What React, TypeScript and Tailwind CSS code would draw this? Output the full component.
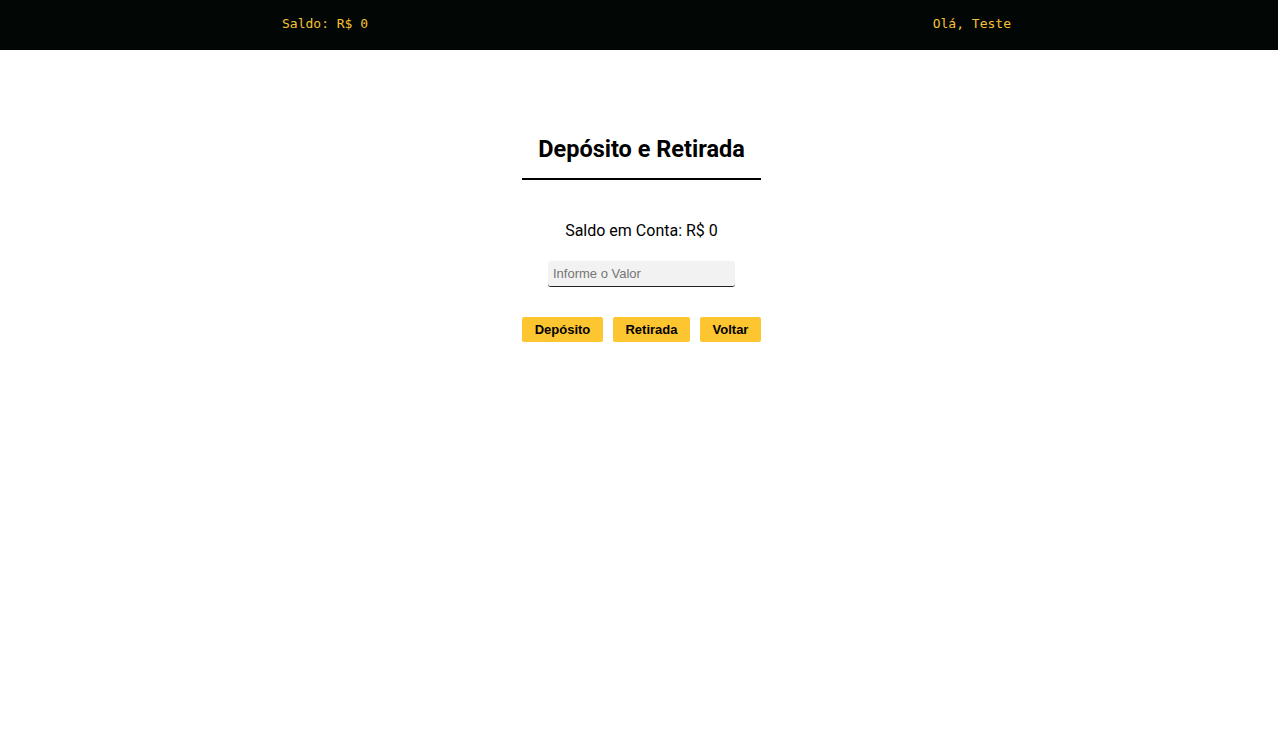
export default function App() {
  return (
    <div className="min-h-screen bg-white">
      {/* topo */}
      <header className="flex h-[50px] items-center justify-between bg-[#020604] pb-[2px] pl-[282px] pr-[267px] font-['DejaVu_Sans_Mono',monospace] text-[13px] text-[#f7c133]">
        <span>Saldo: R$ 0</span>
        <span>Olá, Teste</span>
      </header>

      {/* conteúdo */}
      <main className="flex justify-center pl-[5px] pt-[83px] font-['Roboto',sans-serif]">
        <div className="flex w-[239px] flex-col items-center">
          <h2 className="w-full border-b-2 border-black pb-[13px] text-center text-[23.5px] font-bold leading-8 text-black">
            Depósito e Retirada
          </h2>

          <p className="mt-[39px] text-base leading-6 text-black">Saldo em Conta: R$ 0</p>

          <input
            type="text"
            placeholder="Informe o Valor"
            className="mt-[18px] h-[26px] w-[187px] rounded-[3px] border-b border-[#222] bg-[#f2f2f2] px-[5px] font-['Liberation_Sans',sans-serif] text-[13px] text-black outline-none placeholder:text-[#757575]"
          />

          <div className="mt-[30px] flex w-full gap-[10px] font-['Liberation_Sans',sans-serif] text-[13px] font-bold text-black">
            <button className="h-[25px] w-[81px] rounded-[2px] bg-[#fdc530]">Depósito</button>
            <button className="h-[25px] w-[77px] rounded-[2px] bg-[#fdc530]">Retirada</button>
            <button className="h-[25px] w-[61px] rounded-[2px] bg-[#fdc530]">Voltar</button>
          </div>
        </div>
      </main>
    </div>
  )
}
